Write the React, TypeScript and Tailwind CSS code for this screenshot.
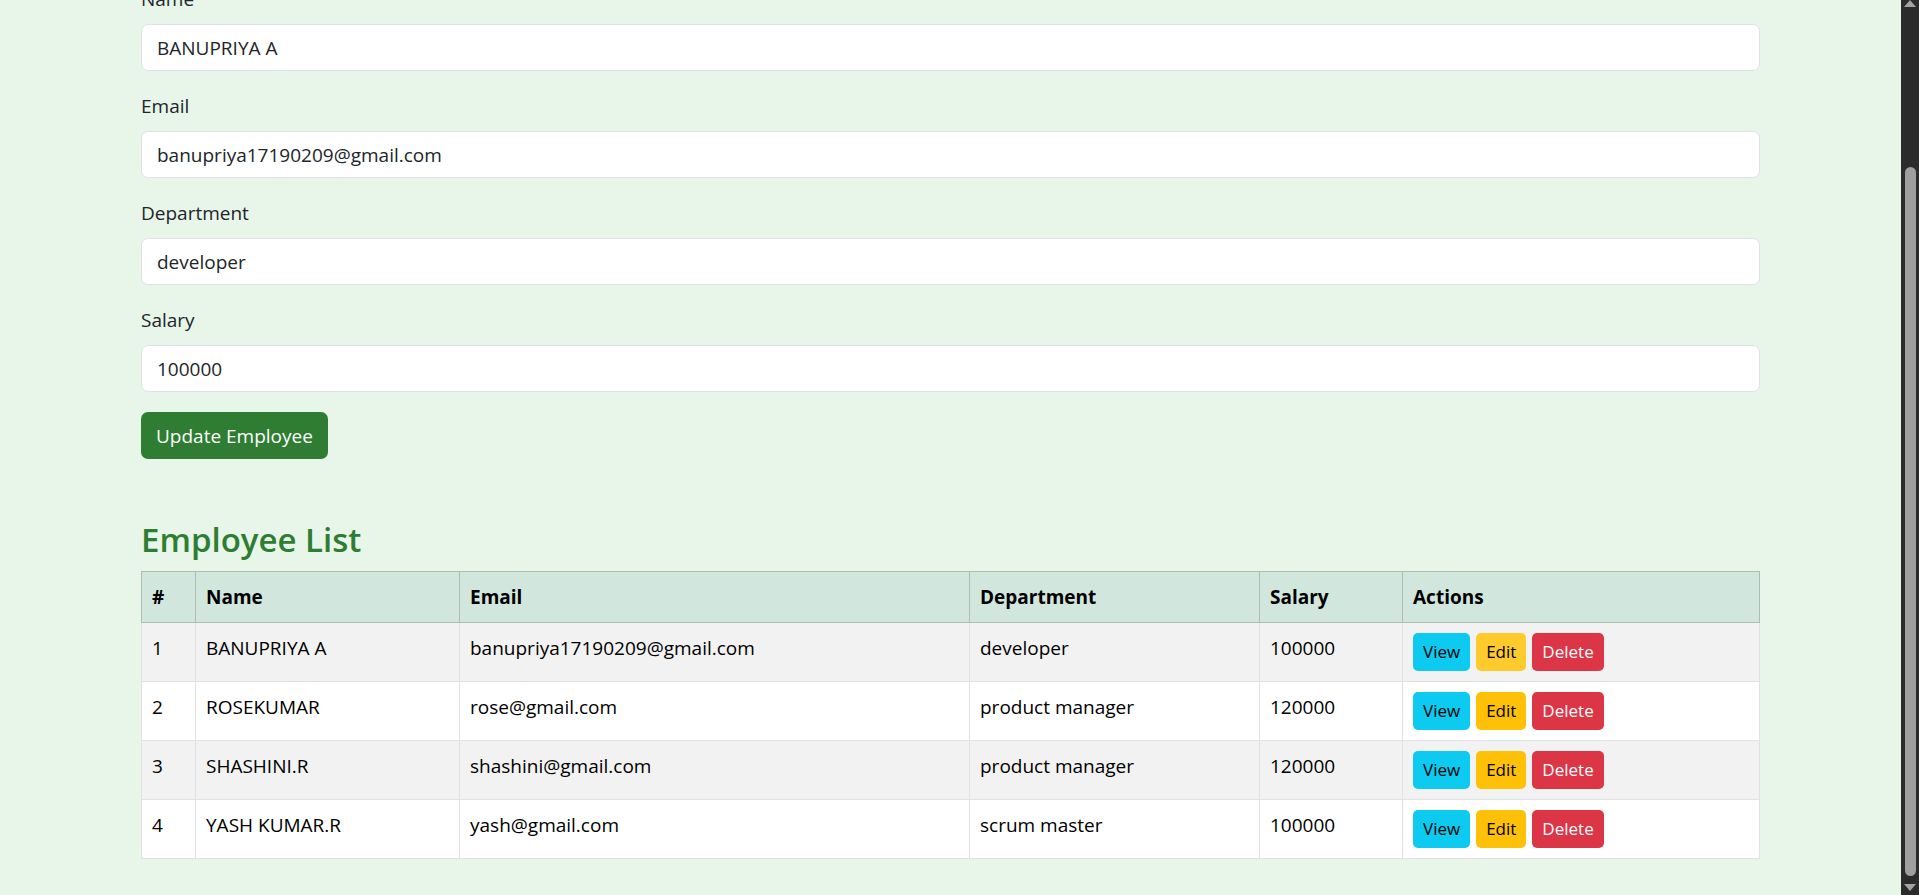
import { useState } from 'react'

interface Employee {
  id: number
  name: string
  email: string
  department: string
  salary: string
}

const employees: Employee[] = [
  { id: 1, name: 'BANUPRIYA A', email: 'banupriya17190209@gmail.com', department: 'developer', salary: '100000' },
  { id: 2, name: 'ROSEKUMAR', email: 'rose@gmail.com', department: 'product manager', salary: '120000' },
  { id: 3, name: 'SHASHINI.R', email: 'shashini@gmail.com', department: 'product manager', salary: '120000' },
  { id: 4, name: 'YASH KUMAR.R', email: 'yash@gmail.com', department: 'scrum master', salary: '100000' },
]

const fields = [
  { key: 'name', label: 'Name', type: 'text' },
  { key: 'email', label: 'Email', type: 'email' },
  { key: 'department', label: 'Department', type: 'text' },
  { key: 'salary', label: 'Salary', type: 'number' },
] as const

function ScrollBar() {
  return (
    <div className="flex h-full w-[18px] shrink-0 flex-col items-center bg-[#2b2b2b]">
      <svg width="12" height="7" viewBox="0 0 12 7">
        <path d="M6 0 L12 7 L0 7 Z" fill="#a3a3a3" />
      </svg>
      <div className="mt-[160px] w-[11px] flex-1 rounded-full bg-[#9f9f9f]" />
      <svg width="12" height="7" viewBox="0 0 12 7" className="mb-[4px] mt-[8px]">
        <path d="M0 0 L12 0 L6 7 Z" fill="#a3a3a3" />
      </svg>
    </div>
  )
}

export default function App() {
  const [form, setForm] = useState({
    name: 'BANUPRIYA A',
    email: 'banupriya17190209@gmail.com',
    department: 'developer',
    salary: '100000',
  })

  return (
    <div className="flex h-[895px] overflow-hidden bg-[#e8f5e9] font-['Open_Sans',sans-serif] text-[19px] text-[#212529]">
      <main className="flex-1 overflow-hidden px-[141px]">
        <form className="mt-[-16px]" onSubmit={(e) => e.preventDefault()}>
          {fields.map((field) => (
            <div key={field.key} className="mb-[20px]">
              <label className="mb-[10px] block leading-[30px]">{field.label}</label>
              <input
                type={field.type === 'number' ? 'text' : field.type}
                value={form[field.key]}
                onChange={(e) => setForm({ ...form, [field.key]: e.target.value })}
                className="block h-[47px] w-full rounded-[7px] border border-[#dee2e6] bg-white px-[15px] leading-[30px] text-[#212529] outline-none"
              />
            </div>
          ))}
          <button type="submit" className="h-[47px] rounded-[7px] bg-[#2e7d32] px-[15px] leading-[30px] text-white">
            Update Employee
          </button>
        </form>

        <section className="mt-[60px]">
          <h3 className="mb-[10px] text-[33px] font-semibold leading-[42px] text-[#2e7d32]">Employee List</h3>
          <table className="w-full table-fixed border-collapse text-left leading-[30px] text-black">
            <thead className="bg-[#d1e7dd]">
              <tr>
                <th className="w-[54px] border border-[#abbdb4] px-[10px] py-[10px] font-bold">#</th>
                <th className="w-[264px] border border-[#abbdb4] px-[10px] py-[10px] font-bold">Name</th>
                <th className="w-[510px] border border-[#abbdb4] px-[10px] py-[10px] font-bold">Email</th>
                <th className="w-[290px] border border-[#abbdb4] px-[10px] py-[10px] font-bold">Department</th>
                <th className="w-[143px] border border-[#abbdb4] px-[10px] py-[10px] font-bold">Salary</th>
                <th className="border border-[#abbdb4] px-[10px] py-[10px] font-bold">Actions</th>
              </tr>
            </thead>
            <tbody>
              {employees.map((emp, index) => (
                <tr key={emp.id} className={index % 2 === 0 ? 'bg-[#f2f2f2]' : 'bg-white'}>
                  <td className="border border-[#dee2e6] px-[10px] py-[10px] align-top">{emp.id}</td>
                  <td className="border border-[#dee2e6] px-[10px] py-[10px] align-top">{emp.name}</td>
                  <td className="border border-[#dee2e6] px-[10px] py-[10px] align-top">{emp.email}</td>
                  <td className="border border-[#dee2e6] px-[10px] py-[10px] align-top">{emp.department}</td>
                  <td className="border border-[#dee2e6] px-[10px] py-[10px] align-top">{emp.salary}</td>
                  <td className="border border-[#dee2e6] px-[10px] py-[10px] align-top">
                    <div className="flex gap-[6px]">
                      <button type="button" className="flex h-[38px] items-center rounded-[5px] bg-[#0dcaf0] px-[10px] text-[17px] text-black">
                        View
                      </button>
                      <button
                        type="button"
                        className={`flex h-[38px] items-center rounded-[5px] px-[10px] text-[17px] text-black ${index === 0 ? 'bg-[#ffca2c]' : 'bg-[#ffc107]'}`}
                      >
                        Edit
                      </button>
                      <button type="button" className="flex h-[38px] items-center rounded-[5px] bg-[#dc3545] px-[10px] text-[17px] text-white">
                        Delete
                      </button>
                    </div>
                  </td>
                </tr>
              ))}
            </tbody>
          </table>
        </section>
      </main>
      <ScrollBar />
    </div>
  )
}
